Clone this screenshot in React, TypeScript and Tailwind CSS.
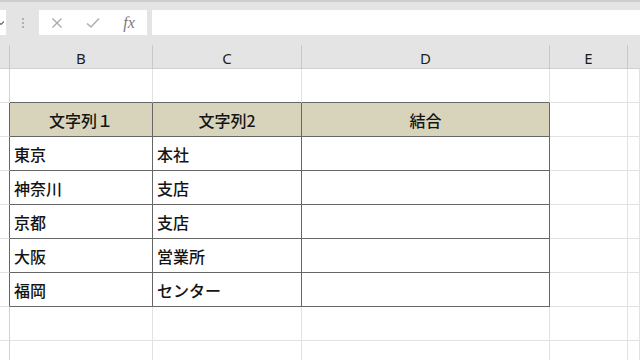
import React from 'react'

const cols = ['', 'B', 'C', 'D', 'E', '']
const gridCols = 'grid grid-cols-[10px_143px_149px_248px_78px_1fr]'

const rows: string[][] = [
  ['', '', '', ''],
  ['', '文字列１', '文字列2', '結合'],
  ['', '東京', '本社', ''],
  ['', '神奈川', '支店', ''],
  ['', '京都', '支店', ''],
  ['', '大阪', '営業所', ''],
  ['', '福岡', 'センター', ''],
  ['', '', '', ''],
  ['', '', '', ''],
]

const inTableRow = (r: number) => r >= 1 && r <= 6

function cellClass(r: number, c: number) {
  const rightDark = inTableRow(r) && c <= 3
  const bottomDark = c >= 1 && c <= 3 && r <= 6
  const right = rightDark ? 'border-r-[#666666]' : c === 0 ? 'border-r-[#d2d2d2]' : 'border-r-[#e2e2e2]'
  const bottom = bottomDark ? 'border-b-[#666666]' : 'border-b-[#e2e2e2]'
  const fill = r === 1 && c >= 1 && c <= 3 ? 'bg-[#d8d4bb] justify-center' : 'bg-white'
  return `h-[34px] border-r border-b flex items-center ${right} ${bottom} ${fill}`
}

function Toolbar() {
  return (
    <div className="h-[35px] bg-[#e4e4e4] border-t-[2px] border-[#cdcdcd] flex items-end">
      {/* name box (cut off) */}
      <div className="w-[6px] h-[25px] bg-white flex items-center">
        <svg width="6" height="6" viewBox="0 0 6 6" className="-ml-[2px]">
          <path d="M0 1.5 L3 4.5 L6 1.5" fill="none" stroke="#666" strokeWidth="1.2" />
        </svg>
      </div>
      <div className="w-[33px] h-[25px] flex items-center justify-center">
        <svg width="4" height="12" viewBox="0 0 4 12">
          <circle cx="2" cy="2" r="0.9" fill="#999" />
          <circle cx="2" cy="6" r="0.9" fill="#999" />
          <circle cx="2" cy="10" r="0.9" fill="#999" />
        </svg>
      </div>
      <div className="w-[108px] h-[25px] bg-white flex items-center">
        <div className="w-[36px] flex justify-center">
          <svg width="12" height="12" viewBox="0 0 12 12">
            <path d="M1.5 1.5 L10.5 10.5 M10.5 1.5 L1.5 10.5" stroke="#a8a8a8" strokeWidth="1.3" />
          </svg>
        </div>
        <div className="w-[36px] flex justify-center">
          <svg width="14" height="12" viewBox="0 0 14 12">
            <path d="M1 6.5 L5 10 L13 1.5" fill="none" stroke="#b0b0b0" strokeWidth="1.6" />
          </svg>
        </div>
        <div className="w-[36px] flex justify-center text-[16px] italic text-[#7a7a7a] font-['Liberation_Serif',serif] leading-none">
          fx
        </div>
      </div>
      <div className="w-[5px]" />
      <div className="flex-1 h-[25px] bg-white" />
    </div>
  )
}

function ColumnHeader() {
  return (
    <div className="bg-[#e4e4e4] pt-[10px] border-b border-[#d0d0d0]">
      <div className={`${gridCols} h-[23px]`}>
        {cols.map((l, i) => (
          <div
            key={i}
            className={`flex items-center justify-center pt-[2px] text-[15px] text-[#1e1e1e] font-['Noto_Sans',sans-serif] ${i < 5 ? 'border-r border-[#c8c8c8]' : ''}`}
          >
            {l}
          </div>
        ))}
      </div>
    </div>
  )
}

export default function App() {
  return (
    <div className="w-[640px] h-[360px] overflow-hidden bg-white font-['Noto_Sans_CJK_JP',sans-serif]">
      <Toolbar />
      <ColumnHeader />
      <div className={gridCols}>
        {rows.map((row, r) =>
          [0, 1, 2, 3, 4, 5].map(c => (
            <div key={`${r}-${c}`} className={cellClass(r, c)}>
              {c >= 1 && c <= 3 && row[c] && (
                <span className={`text-[16px] font-medium text-[#141414] leading-none ${r === 1 ? '' : 'pl-[4px]'}`}>
                  {row[c]}
                </span>
              )}
            </div>
          ))
        )}
      </div>
    </div>
  )
}
